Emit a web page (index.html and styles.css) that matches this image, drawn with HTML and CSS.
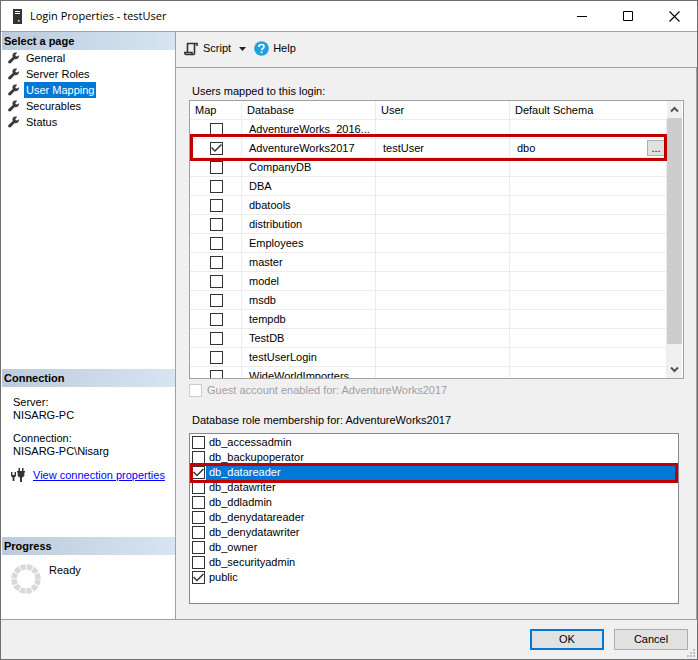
FILE: index.html
```html
<!DOCTYPE html>
<html lang="en">
<head>
  <meta charset="UTF-8">
  <meta name="viewport" content="width=device-width, initial-scale=1.0">
  <title>Login Properties - testUser</title>
  <link rel="stylesheet" href="styles.css">
</head>
<body>
  <svg class="symbols" aria-hidden="true">
    <symbol id="wrench" viewBox="0 0 12 12">
      <path d="M11 3.2 9.2 4.400 7.6 3.900 7.500 2.400 9.200.9C7.500.1 5.400.7 4.700 2.300c-.4.9-.3 1.800.1 2.600L.7 8.800c-.8.7-.8 1.700-.2 2.300.7.7 1.700.6 2.400-.2l3.900-3.800c2.500.6 4.700-1.500 4.200-3.900z" fill="#3c3c3c"/>
    </symbol>
  </svg>

  <div class="window">
    <header class="titlebar">
      <svg class="server-icon" width="9" height="15" viewBox="0 0 9 15">
        <path d="M0 0h9v15H0z" fill="#333"/>
        <path d="M2 2.500h5M2 4.500h5" stroke="#fff"/>
        <path d="M5 11h1.500v1.500H5z" fill="#fff"/>
      </svg>
      <h1>Login Properties - testUser</h1>
      <div class="window-buttons">
        <button aria-label="Minimize">
          <svg width="11" height="11" viewBox="0 0 11 11"><path d="M0 5.500h10" stroke="#000"/></svg>
        </button>
        <button aria-label="Maximize">
          <svg width="11" height="11" viewBox="0 0 11 11"><path d="M.5.5h9v9h-9z" fill="none" stroke="#000"/></svg>
        </button>
        <button aria-label="Close">
          <svg width="11" height="11" viewBox="0 0 11 11"><path d="M.5.5l10 10M10.500.5l-10 10" stroke="#000" stroke-width="1.100"/></svg>
        </button>
      </div>
    </header>

    <div class="body">
      <aside class="sidebar">
        <section class="pages">
          <h2>Select a page</h2>
          <nav>
            <a href="#general"><svg width="12" height="12"><use href="#wrench"/></svg><span>General</span></a>
            <a href="#server-roles"><svg width="12" height="12"><use href="#wrench"/></svg><span>Server Roles</span></a>
            <a href="#user-mapping" class="active"><svg width="12" height="12"><use href="#wrench"/></svg><span>User Mapping</span></a>
            <a href="#securables"><svg width="12" height="12"><use href="#wrench"/></svg><span>Securables</span></a>
            <a href="#status"><svg width="12" height="12"><use href="#wrench"/></svg><span>Status</span></a>
          </nav>
        </section>

        <section class="connection">
          <h2>Connection</h2>
          <dl>
            <dt>Server:</dt>
            <dd>NISARG-PC</dd>
            <dt>Connection:</dt>
            <dd>NISARG-PC\Nisarg</dd>
          </dl>
          <div class="view-link">
            <svg width="14" height="14" viewBox="0 0 14 14">
              <path d="M0 4h1.400v3h2.200V4H5v4L3.400 9.500V13H1.600V9.500L0 8z" fill="#333"/>
              <path d="M7.500 0H9v3h2V0h1.500v3H14v1.500h-.7V8l-2 1.500H11V14H9V9.500h-.3L6.700 8V4.500H6V3h1.500z" fill="#333"/>
            </svg>
            <a href="#connection-properties">View connection properties</a>
          </div>
        </section>

        <section class="progress">
          <h2>Progress</h2>
          <div class="progress-state">
            <svg width="30" height="30" viewBox="0 0 30 30">
              <circle cx="15" cy="15" r="12" fill="none" stroke="#d9d9d9" stroke-width="5.500" stroke-dasharray="5.280 1" stroke-dashoffset="-.5"/>
            </svg>
            <span>Ready</span>
          </div>
        </section>
      </aside>

      <main class="main">
        <div class="toolbar">
          <button class="tool">
            <svg width="15" height="14" viewBox="0 0 15 14">
              <path d="M3.500 10V1.500H13V4M10.500 2V11.500Q10.500 12.500 9.500 12.500H2Q.8 12.500.8 10.500H8V12" fill="none" stroke="#333" stroke-width="1.600"/>
            </svg>
            Script
          </button>
          <button class="drop" aria-label="Script options">
            <svg width="7" height="4" viewBox="0 0 7 4"><path d="M0 0h7L3.500 4z" fill="#222"/></svg>
          </button>
          <button class="tool">
            <svg width="15" height="15" viewBox="0 0 15 15">
              <circle cx="7.500" cy="7.500" r="7.300" fill="#1ba1e2"/>
              <path d="M5 6V5.500Q5 3.500 7.500 3.500T10 5.600Q10 6.700 8.800 7.400T7.600 9.300" fill="none" stroke="#fff" stroke-width="1.700"/>
              <path d="M6.700 10.500h1.800v1.700H6.700z" fill="#fff"/>
            </svg>
            Help
          </button>
        </div>

        <div class="panel">
          <p class="caption">Users mapped to this login:</p>
          <div class="grid">
            <div class="grid-view">
              <table>
                <thead>
                  <tr><th class="map">Map</th><th class="name">Database</th><th class="name">User</th><th>Default Schema</th></tr>
                </thead>
                <tbody>
                  <tr><td><input type="checkbox" aria-label="AdventureWorks_2016"></td><td>AdventureWorks_2016...</td><td></td><td></td></tr>
                  <tr class="marked-row">
                    <td><input type="checkbox" aria-label="AdventureWorks2017" checked></td>
                    <td>AdventureWorks2017</td>
                    <td>testUser</td>
                    <td><div class="schema">dbo<button aria-label="Browse schemas">...</button></div></td>
                  </tr>
                  <tr><td><input type="checkbox" aria-label="CompanyDB"></td><td>CompanyDB</td><td></td><td></td></tr>
                  <tr><td><input type="checkbox" aria-label="DBA"></td><td>DBA</td><td></td><td></td></tr>
                  <tr><td><input type="checkbox" aria-label="dbatools"></td><td>dbatools</td><td></td><td></td></tr>
                  <tr><td><input type="checkbox" aria-label="distribution"></td><td>distribution</td><td></td><td></td></tr>
                  <tr><td><input type="checkbox" aria-label="Employees"></td><td>Employees</td><td></td><td></td></tr>
                  <tr><td><input type="checkbox" aria-label="master"></td><td>master</td><td></td><td></td></tr>
                  <tr><td><input type="checkbox" aria-label="model"></td><td>model</td><td></td><td></td></tr>
                  <tr><td><input type="checkbox" aria-label="msdb"></td><td>msdb</td><td></td><td></td></tr>
                  <tr><td><input type="checkbox" aria-label="tempdb"></td><td>tempdb</td><td></td><td></td></tr>
                  <tr><td><input type="checkbox" aria-label="TestDB"></td><td>TestDB</td><td></td><td></td></tr>
                  <tr><td><input type="checkbox" aria-label="testUserLogin"></td><td>testUserLogin</td><td></td><td></td></tr>
                  <tr><td><input type="checkbox" aria-label="WideWorldImporters"></td><td>WideWorldImporters</td><td></td><td></td></tr>
                </tbody>
              </table>
            </div>
            <div class="scrollbar">
              <button aria-label="Scroll up">
                <svg width="9" height="7" viewBox="0 0 9 7"><path d="M1 5.500 4.500 2 8 5.500" fill="none" stroke="#555" stroke-width="2"/></svg>
              </button>
              <div class="track"><div class="thumb"></div></div>
              <button aria-label="Scroll down">
                <svg width="9" height="7" viewBox="0 0 9 7"><path d="M1 1.500 4.500 5 8 1.500" fill="none" stroke="#555" stroke-width="2"/></svg>
              </button>
            </div>
          </div>
          <label class="guest"><input type="checkbox" disabled>Guest account enabled for: AdventureWorks2017</label>

          <p class="caption">Database role membership for: AdventureWorks2017</p>
          <div class="roles">
            <label><input type="checkbox"><span>db_accessadmin</span></label>
            <label><input type="checkbox"><span>db_backupoperator</span></label>
            <label class="selected"><input type="checkbox" checked><span>db_datareader</span></label>
            <label><input type="checkbox"><span>db_datawriter</span></label>
            <label><input type="checkbox"><span>db_ddladmin</span></label>
            <label><input type="checkbox"><span>db_denydatareader</span></label>
            <label><input type="checkbox"><span>db_denydatawriter</span></label>
            <label><input type="checkbox"><span>db_owner</span></label>
            <label><input type="checkbox"><span>db_securityadmin</span></label>
            <label><input type="checkbox" checked><span>public</span></label>
          </div>
        </div>
      </main>
    </div>

    <footer class="footer">
      <button class="primary">OK</button>
      <button>Cancel</button>
      <svg class="grip" width="8" height="8" viewBox="0 0 8 8">
        <path d="M6 0h2v2H6zM3 3h2v2H3zM6 3h2v2H6zM0 6h2v2H0zM3 6h2v2H3zM6 6h2v2H6z" fill="#bfbfbf"/>
      </svg>
    </footer>
  </div>
</body>
</html>
```
FILE: styles.css
```css
* {
  box-sizing: border-box;
}
body {
  margin: 0;
  font-family: "Liberation Sans", Arial, sans-serif;
  font-size: 11px;
  line-height: 13px;
  color: #000;
}
button {
  font: inherit;
  color: inherit;
  padding: 0;
  border: none;
  background: none;
}
svg {
  flex: none;
}
h1, h2, p, dl, dd {
  margin: 0;
}
.symbols {
  display: none;
}
.window {
  height: 100vh;
  min-height: 560px;
  display: flex;
  flex-direction: column;
  border: 1px solid #6e6e70;
  background-color: #f0f0f0;
}

/* title bar */
.titlebar {
  display: flex;
  align-items: center;
  height: 31px;
  padding-left: 12px;
  gap: 8px;
  background-color: #fff;
  border-bottom: 1px solid #a0a0a0;
}
.titlebar h1 {
  flex: 1;
  font-family: "Open Sans", "Noto Sans", sans-serif;
  font-size: 11px;
  font-weight: normal;
  line-height: 16px;
}
.window-buttons {
  display: flex;
}
.window-buttons button {
  width: 46px;
  height: 30px;
  display: flex;
  align-items: center;
  justify-content: center;
}

.body {
  flex: 1;
  min-height: 0;
  display: flex;
}

/* left column */
.sidebar {
  width: 175px;
  display: flex;
  flex-direction: column;
  padding-left: 1px;
  background-color: #fff;
  border-right: 1px solid #a0a0a0;
}
.sidebar h2 {
  height: 18px;
  padding-left: 2px;
  font-size: 11px;
  line-height: 18px;
  background: linear-gradient(to right, #bccbdb, #d7e4f2);
}
.pages {
  flex: 1;
}
.pages nav a {
  display: flex;
  align-items: center;
  gap: 4px;
  height: 16px;
  padding-left: 6px;
  color: #000;
  text-decoration: none;
}
.pages nav span {
  padding: 0 2px;
  line-height: 16px;
}
.pages nav .active span {
  background-color: #0078d7;
  color: #fff;
}
.connection {
  height: 168px;
}
.connection dl {
  padding: 9px 11px 0;
}
.connection dd {
  margin-bottom: 10px;
}
.view-link {
  display: flex;
  align-items: center;
  gap: 8px;
  padding-left: 9px;
}
.view-link a {
  color: #00f;
}
.progress {
  height: 82px;
}
.progress-state {
  display: flex;
  gap: 8px;
  padding: 9px;
}

/* right side */
.main {
  flex: 1;
  min-width: 0;
  display: flex;
  flex-direction: column;
}
.toolbar {
  display: flex;
  align-items: center;
  height: 36px;
  padding: 0 8px 2px;
  border-bottom: 1px solid #a0a0a0;
}
.tool {
  display: flex;
  align-items: center;
  gap: 4px;
}
.drop {
  display: flex;
  padding: 4px 8px;
}
.panel {
  flex: 1;
  min-height: 0;
  display: flex;
  flex-direction: column;
  padding: 17px 12px 15px 13px;
  border-right: 1px solid #a0a0a0;
}
.caption {
  padding-left: 3px;
  margin-bottom: 2px;
}
input[type="checkbox"] {
  appearance: none;
  flex: none;
  display: block;
  width: 13px;
  height: 13px;
  margin: 0;
  border: 1px solid #333;
  background-color: #fff;
}
input[type="checkbox"]:checked::before {
  content: "";
  display: block;
  height: 11px;
  background-color: #333;
  clip-path: polygon(0 50%, 10% 42%, 36% 68%, 90% 14%, 100% 23%, 36% 86%);
}
input[type="checkbox"]:disabled {
  border-color: #ccc;
}

.grid {
  flex: 1;
  min-height: 0;
  display: flex;
  background-color: #fff;
  border: 1px solid #a0a0a0;
}
.grid-view {
  flex: 1;
  overflow: hidden;
}
table {
  width: 100%;
  table-layout: fixed;
  border-collapse: separate;
  border-spacing: 0;
}
th, td {
  height: 19px;
  padding: 0 0 0 7px;
  text-align: left;
  font-weight: normal;
  white-space: nowrap;
  border-right: 1px solid #ececec;
  border-bottom: 1px solid #ececec;
}
th {
  padding-left: 5px;
}
th:last-child {
  border-right: none;
}
.map {
  width: 52px;
}
.name {
  width: 134px;
}
td input[type="checkbox"] {
  margin-left: 13px;
}
.schema {
  display: flex;
  align-items: center;
  justify-content: space-between;
}
.schema button {
  width: 18px;
  height: 16px;
  margin-right: 1px;
  border: 1px solid #adadad;
  background-color: #e1e1e1;
}

/* red frame over the highlighted rows */
.marked-row, .selected {
  position: relative;
}
.marked-row td:first-child::after, .selected::after {
  content: "";
  position: absolute;
  inset: -5px 0 -3px;
  border: 3px solid #c00000;
  pointer-events: none;
}
.selected::after {
  inset: -2px 0 -3px;
}

.scrollbar {
  width: 15px;
  display: flex;
  flex-direction: column;
  margin-right: 1px;
  background-color: #f0f0f0;
}
.scrollbar button {
  height: 17px;
  display: flex;
  align-items: center;
  justify-content: center;
}
.track {
  flex: 1;
}
.thumb {
  height: 93%;
  background-color: #cdcdcd;
}
.guest {
  display: flex;
  align-items: center;
  gap: 5px;
  margin: 5px 0 17px;
  color: #a0a0a0;
}
.roles {
  margin: 4px 5px 0 0;
  padding: 1px 0 18px;
  background-color: #fff;
  border: 1px solid #828790;
}
.roles label {
  display: flex;
  align-items: center;
  gap: 1px;
  height: 15px;
  padding: 0 3px 0 2px;
}
.roles span {
  flex: 1;
  padding-left: 3px;
  line-height: 15px;
}
.roles .selected span {
  background-color: #0078d7;
  color: #fff;
}

/* bottom buttons */
.footer {
  position: relative;
  display: flex;
  justify-content: flex-end;
  gap: 10px;
  padding: 9px;
  border-top: 1px solid #a0a0a0;
}
.footer button {
  width: 74px;
  height: 21px;
  border: 1px solid #adadad;
  background-color: #e1e1e1;
}
.footer .primary {
  border: 2px solid #0078d7;
}
.grip {
  position: absolute;
  right: 2px;
  bottom: 2px;
}
```
